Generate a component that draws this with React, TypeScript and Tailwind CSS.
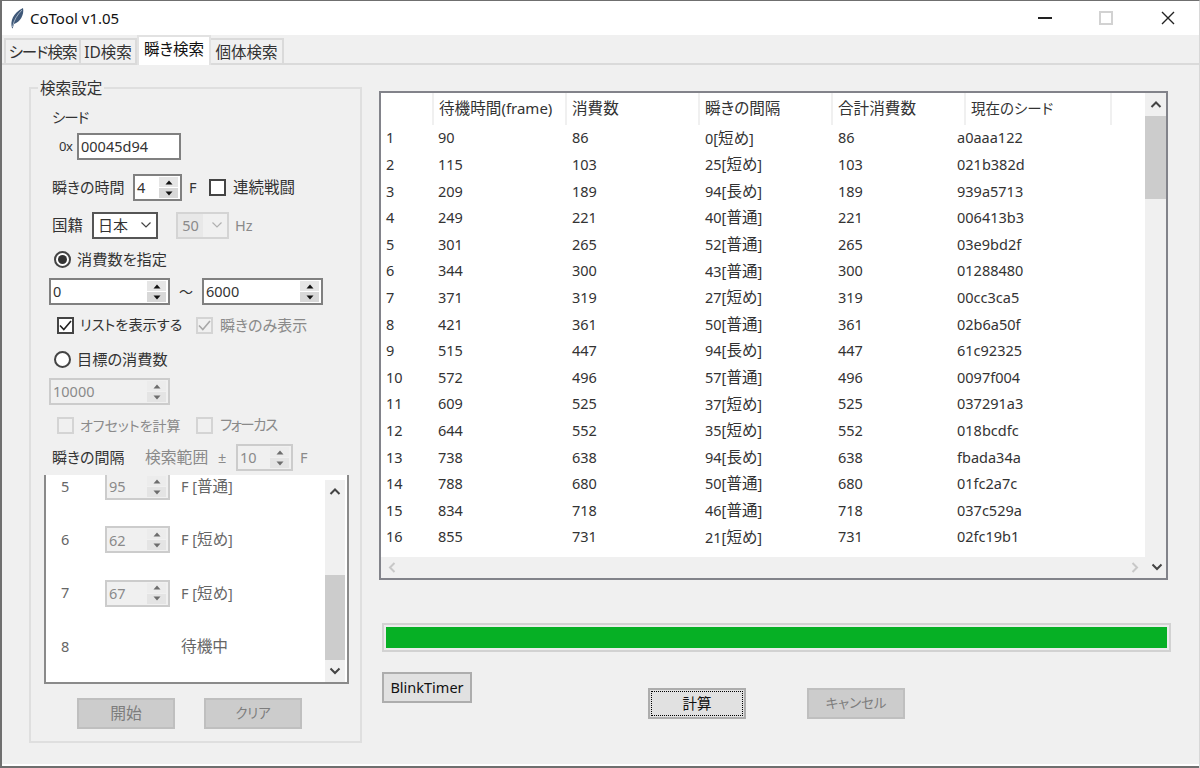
import React from 'react';

const rows = [
  ['1', '90', '86', '0', '短め', '86', 'a0aaa122'],
  ['2', '115', '103', '25', '短め', '103', '021b382d'],
  ['3', '209', '189', '94', '長め', '189', '939a5713'],
  ['4', '249', '221', '40', '普通', '221', '006413b3'],
  ['5', '301', '265', '52', '普通', '265', '03e9bd2f'],
  ['6', '344', '300', '43', '普通', '300', '01288480'],
  ['7', '371', '319', '27', '短め', '319', '00cc3ca5'],
  ['8', '421', '361', '50', '普通', '361', '02b6a50f'],
  ['9', '515', '447', '94', '長め', '447', '61c92325'],
  ['10', '572', '496', '57', '普通', '496', '0097f004'],
  ['11', '609', '525', '37', '短め', '525', '037291a3'],
  ['12', '644', '552', '35', '短め', '552', '018bcdfc'],
  ['13', '738', '638', '94', '長め', '638', 'fbada34a'],
  ['14', '788', '680', '50', '普通', '680', '01fc2a7c'],
  ['15', '834', '718', '46', '普通', '718', '037c529a'],
  ['16', '855', '731', '21', '短め', '731', '02fc19b1'],
];

function Triangle({ up, disabled }: { up: boolean; disabled?: boolean }) {
  return (
    <svg width="8" height="5" viewBox="0 0 8 5">
      <path d={up ? 'M4 0.5 L7.5 4.5 L0.5 4.5 Z' : 'M4 4.5 L7.5 0.5 L0.5 0.5 Z'} fill={disabled ? '#6d6d6d' : '#111'} />
    </svg>
  );
}

function Spin({ value, width, disabled }: { value: string; width: string; disabled?: boolean }) {
  return (
    <div className={`${width} h-[27px] flex items-center border-2 pl-[2px] pr-[2px] ${disabled ? 'border-[#cccccc] bg-[#f0f0f0] text-[#8a8a8a]' : 'border-[#808080] bg-white text-[#333]'}`}>
      <span className="flex-1 leading-none">{value}</span>
      <div className="flex flex-col gap-px w-[19px]">
        <div className={`h-[10px] flex items-center justify-center ${disabled ? 'bg-[#ececec]' : 'bg-[#e6e6e6]'}`}><Triangle up disabled={disabled} /></div>
        <div className={`h-[10px] flex items-center justify-center ${disabled ? 'bg-[#e4e4e4]' : 'bg-[#d8d8d8]'}`}><Triangle up={false} disabled={disabled} /></div>
      </div>
    </div>
  );
}

function Check({ label, checked, disabled, className, labelClass }: { label: string; checked?: boolean; disabled?: boolean; className: string; labelClass: string }) {
  return (
    <div className={`flex items-center ${className}`}>
      <div className={`w-[17px] h-[17px] border-2 flex items-center justify-center shrink-0 ${disabled ? 'border-[#d4d4d4]' : 'border-[#444] bg-white'}`}>
        {checked && (
          <svg width="13" height="11" viewBox="0 0 13 11">
            <path d="M1 5.5 L4.8 9.5 L12 1" fill="none" stroke={disabled ? '#a8a8a8' : '#222'} strokeWidth="1.6" />
          </svg>
        )}
      </div>
      <span className={`${labelClass} ${disabled ? 'text-[#8a8a8a]' : 'text-[#333]'}`}>{label}</span>
    </div>
  );
}

function Radio({ label, checked }: { label: string; checked?: boolean }) {
  return (
    <div className="flex items-center pl-[22px]">
      <div className="w-[17px] h-[17px] rounded-full border-2 border-[#444] bg-white flex items-center justify-center">
        {checked && <div className="w-[9px] h-[9px] rounded-full bg-[#333]" />}
      </div>
      <span className="ml-[6px] text-[15.2px] text-[#333]">{label}</span>
    </div>
  );
}

function Chevron({ dir, color, thin }: { dir: 'up' | 'down' | 'left' | 'right'; color: string; thin?: boolean }) {
  const d = {
    up: 'M1.5 7 L6 2.5 L10.5 7',
    down: 'M1.5 2.5 L6 7 L10.5 2.5',
    left: 'M7.5 1 L3 5.5 L7.5 10',
    right: 'M3.5 1 L8 5.5 L3.5 10',
  }[dir];
  return (
    <svg width="12" height="11" viewBox="0 0 12 11">
      <path d={d} fill="none" stroke={color} strokeWidth={thin ? 1.2 : 2} />
    </svg>
  );
}

function BlinkRow({ n, value, note }: { n: string; value?: string; note: string }) {
  return (
    <div className="h-[53.3px] flex items-center text-[#666] shrink-0">
      <span className="w-[59px] pl-[15px]">{n}</span>
      <div className="w-[65px]">{value && <Spin value={value} width="w-[65px]" disabled />}</div>
      {value ? (
        <span className="ml-[11px]">F [<span className="text-[15.5px]">{note}</span>]</span>
      ) : (
        <span className="ml-[11px] text-[15.7px]">{note}</span>
      )}
    </div>
  );
}

function GrayButton({ label, className, textClass }: { label: string; className: string; textClass: string }) {
  return (
    <div className={`h-[31px] w-[98px] flex items-center justify-center bg-[#cccccc] border-2 border-[#bfbfbf] text-[#7d7d7d] ${textClass} ${className}`}>{label}</div>
  );
}

export default function App() {
  return (
    <div className="w-[1200px] h-[768px] overflow-hidden bg-[#f0f0f0] text-[14.5px] [font-family:'Noto_Sans','Noto_Sans_CJK_JP',sans-serif] [font-feature-settings:'palt'] flex flex-col border-l-2 border-t border-r border-[#6f6f6f] border-r-[#d8d8d8]">
      {/* title bar */}
      <div className="h-[34px] bg-white flex items-center shrink-0 text-[#111]">
        <svg className="ml-[7px]" width="16" height="22" viewBox="0 0 16 22">
          <path d="M3 21 C1 14 4 6 14 1 C15.5 8 11 15 5 17 L3.6 21.5 Z" fill="#3f5878" />
          <path d="M3.5 20 C5 13 8 8 13 3" fill="none" stroke="#b9c6d6" strokeWidth="0.8" />
        </svg>
        <span className="ml-[5px] text-[15px]">CoTool v1.05</span>
        <div className="ml-auto flex items-center">
          <div className="w-[14px] h-[2px] bg-[#222] mr-[47px]" />
          <div className="w-[14px] h-[14px] border-2 border-[#d2d2d2] mr-[48px]" />
          <svg className="mr-[24px]" width="14" height="14" viewBox="0 0 14 14">
            <path d="M1 1 L13 13 M13 1 L1 13" stroke="#222" strokeWidth="1.4" />
          </svg>
        </div>
      </div>

      {/* tabs */}
      <div className="h-[30px] flex items-end pl-[2px] border-b-2 border-[#dadada] shrink-0 text-[#333] text-[15.5px]">
        <div className="w-[77px] h-[27px] flex items-center justify-center border-2 border-b-0 border-[#dadada] -mb-[2px] tracking-[-1px]">シード検索</div>
        <div className="w-[56px] h-[27px] flex items-center justify-center border-2 border-b-0 border-l-0 border-[#dadada] -mb-[2px]">ID検索</div>
        <div className="w-[74px] h-[30px] flex items-center justify-center bg-white border-2 border-b-0 border-[#e2e2e2] -mb-[2px] pb-[2px] text-[#111]">瞬き検索</div>
        <div className="w-[73px] h-[27px] flex items-center justify-center border-2 border-b-0 border-l-0 border-[#dadada] -mb-[2px]">個体検索</div>
      </div>

      <div className="flex flex-1 min-h-0">
        {/* left panel */}
        <fieldset className="ml-[27px] mt-[13px] w-[333px] h-[665px] border-2 border-[#dfdfdf] shrink-0 text-[#333] pl-[1px]">
          <legend className="ml-[6px] px-[2px] h-[20px] leading-[20px] text-[15.6px]">検索設定</legend>
          <div className="flex flex-col">
            <div className="pl-[20px] h-[20px] mt-[9px] leading-[20px] tracking-[-1px]">シード</div>
            <div className="flex items-center mt-[6px] h-[27px]">
              <span className="ml-[27px] w-[18px] text-[13px] tracking-tight">0x</span>
              <div className="w-[104px] h-[27px] border-2 border-[#808080] bg-white flex items-center pl-[2px]">00045d94</div>
            </div>
            <div className="flex items-center mt-[14px] h-[27px]">
              <span className="ml-[20px] w-[81px] text-[15px]">瞬きの時間</span>
              <Spin value="4" width="w-[49px]" />
              <span className="ml-[7px] w-[20px]">F</span>
              <Check label="連続戦闘" className="" labelClass="ml-[7px] text-[15.5px]" />
            </div>
            <div className="flex items-center mt-[11px] h-[27px]">
              <span className="ml-[20px] w-[40px] text-[15.5px]">国籍</span>
              <div className="w-[66px] h-[27px] border-2 border-[#555] bg-white flex items-center pl-[4px] justify-between pr-[4px] text-[15px]">
                <span>日本</span>
                <Chevron dir="down" color="#444" thin />
              </div>
              <div className="ml-[18px] w-[53px] h-[27px] border-2 border-[#d4d4d4] flex items-center justify-between pr-[4px] text-[#8a8a8a]">
                <span className="bg-[#e8e8e8] h-full w-[25px] flex items-center justify-center">50</span>
                <Chevron dir="down" color="#b0b0b0" thin />
              </div>
              <span className="ml-[6px] text-[#8a8a8a]">Hz</span>
            </div>
            <div className="mt-[9px] h-[22px] flex items-center"><Radio label="消費数を指定" checked /></div>
            <div className="flex items-center mt-[8px] pl-[17px]">
              <Spin value="0" width="w-[121px]" />
              <span className="w-[32px] text-center text-[14px] leading-none">〜</span>
              <Spin value="6000" width="w-[121px]" />
            </div>
            <div className="flex mt-[9px] h-[22px] pl-[25px]">
              <Check label="リストを表示する" checked className="w-[139px]" labelClass="ml-[6px] text-[14.2px]" />
              <Check label="瞬きのみ表示" checked disabled className="" labelClass="ml-[7px] text-[15px]" />
            </div>
            <div className="mt-[12px] h-[22px] flex items-center"><Radio label="目標の消費数" /></div>
            <div className="mt-[8px] pl-[17px]"><Spin value="10000" width="w-[121px]" disabled /></div>
            <div className="flex mt-[9px] h-[22px] pl-[25px]">
              <Check label="オフセットを計算" disabled className="w-[139px]" labelClass="ml-[6px] text-[14px]" />
              <Check label="フォーカス" disabled className="" labelClass="ml-[7px] tracking-[-1.5px]" />
            </div>
            <div className="flex items-center mt-[8px] h-[27px]">
              <span className="ml-[20px] w-[93px] text-[15px]">瞬きの間隔</span>
              <span className="text-[#8a8a8a] w-[73px] text-[15.8px]">検索範囲</span>
              <span className="text-[#8a8a8a] w-[18px]">±</span>
              <Spin value="10" width="w-[57px]" disabled />
              <span className="ml-[7px] text-[#8a8a8a]">F</span>
            </div>
            {/* blink interval list */}
            <div className="ml-[12px] mt-[4px] w-[305px] h-[209px] bg-white border-2 border-t-0 border-[#8a8a8a] flex overflow-hidden">
              <div className="w-[279px] flex flex-col -mt-[15px]">
                <BlinkRow n="5" value="95" note="普通" />
                <BlinkRow n="6" value="62" note="短め" />
                <BlinkRow n="7" value="67" note="短め" />
                <BlinkRow n="8" note="待機中" />
              </div>
              <div className="w-[20px] mt-[5px] bg-[#f0f0f0] flex flex-col">
                <div className="h-[24px] flex items-center justify-center"><Chevron dir="up" color="#444" /></div>
                <div className="h-[71px]" />
                <div className="h-[85px] bg-[#cccccc]" />
                <div className="flex-1 flex items-center justify-center"><Chevron dir="down" color="#444" /></div>
              </div>
            </div>
            <div className="flex mt-[14px] pl-[45px] gap-[29px]">
              <GrayButton label="開始" className="" textClass="text-[15.8px]" />
              <GrayButton label="クリア" className="" textClass="text-[13.4px]" />
            </div>
          </div>
        </fieldset>

        {/* right panel */}
        <div className="ml-[17px] mt-[26px] flex flex-col w-[793px] text-[#333]">
          <div className="w-[789px] h-[489px] border-2 border-[#82838a] flex flex-col shrink-0 bg-[#f0f0f0]">
            <div className="flex flex-1 min-h-0">
              <div className="flex-1 min-w-0 bg-white">
                <div className="flex h-[32px]">
                  <div className="w-[51px] h-full" />
                  <div className="w-[133px] h-full flex items-center pl-[5px] border-l-2 border-[#f0f0f0] pb-[1px]"><span className="text-[15.6px]">待機時間</span><span className="text-[15px]">(frame)</span></div>
                  <div className="w-[133px] h-full flex items-center pl-[5px] border-l-2 border-[#f0f0f0] pb-[1px] text-[15.6px]">消費数</div>
                  <div className="w-[133px] h-full flex items-center pl-[5px] border-l-2 border-[#f0f0f0] pb-[1px] text-[15.6px]">瞬きの間隔</div>
                  <div className="w-[133px] h-full flex items-center pl-[5px] border-l-2 border-[#f0f0f0] pb-[1px] text-[15.6px]">合計消費数</div>
                  <div className="w-[148px] h-full flex items-center pl-[5px] border-x-2 border-[#f0f0f0] pb-[1px] text-[14.5px]">現在のシード</div>
                </div>
                <div className="flex flex-col">
                  {rows.map((r) => (
                    <div key={r[0]} className="flex h-[26.6px] items-center">
                      <span className="w-[52px] pl-[5px]">{r[0]}</span>
                      <span className="w-[134px] pl-[5px]">{r[1]}</span>
                      <span className="w-[133px] pl-[5px]">{r[2]}</span>
                      <span className="w-[133px] pl-[5px]">{r[3]}[<span className="text-[15.5px]">{r[4]}</span>]</span>
                      <span className="w-[119px] pl-[5px]">{r[5]}</span>
                      <span className="pl-[5px]">{r[6]}</span>
                    </div>
                  ))}
                </div>
              </div>
              <div className="w-[21px] flex flex-col shrink-0">
                <div className="h-[23px] flex items-center justify-center pt-[2px]"><Chevron dir="up" color="#444" /></div>
                <div className="h-[83px] bg-[#cccccc]" />
              </div>
            </div>
            <div className="h-[21px] flex items-center justify-between shrink-0 pl-[6px] pr-[3px]">
              <Chevron dir="left" color="#c8c8c8" />
              <div className="flex items-center gap-[10px]">
                <Chevron dir="right" color="#c8c8c8" />
                <Chevron dir="down" color="#444" />
              </div>
            </div>
          </div>

          <div className="ml-[3px] mt-[43px] w-[789px] h-[29px] border-2 border-[#d2d2d2] p-[2px] bg-[#ececec] shrink-0">
            <div className="w-full h-full bg-[#06b025]" />
          </div>

          <div className="flex items-start mt-[20px] ml-[3px]">
            <div className="w-[90px] h-[31px] flex items-center justify-center bg-[#e1e1e1] border-2 border-[#adadad] text-[#111]">BlinkTimer</div>
            <div className="ml-[176px] mt-[16px] w-[98px] h-[31px] p-[1px] bg-[#e1e1e1] border-2 border-[#adadad] text-[#111]">
              <div className="w-full h-full flex items-center justify-center border border-dotted border-black">計算</div>
            </div>
            <GrayButton label="キャンセル" className="ml-[61px] mt-[16px]" textClass="text-[13.4px]" />
          </div>
        </div>
      </div>

      {/* window bottom edge */}
      <div className="h-[2px] bg-white shrink-0" />
      <div className="h-[2px] bg-[#6f6f6f] shrink-0" />
    </div>
  );
}
